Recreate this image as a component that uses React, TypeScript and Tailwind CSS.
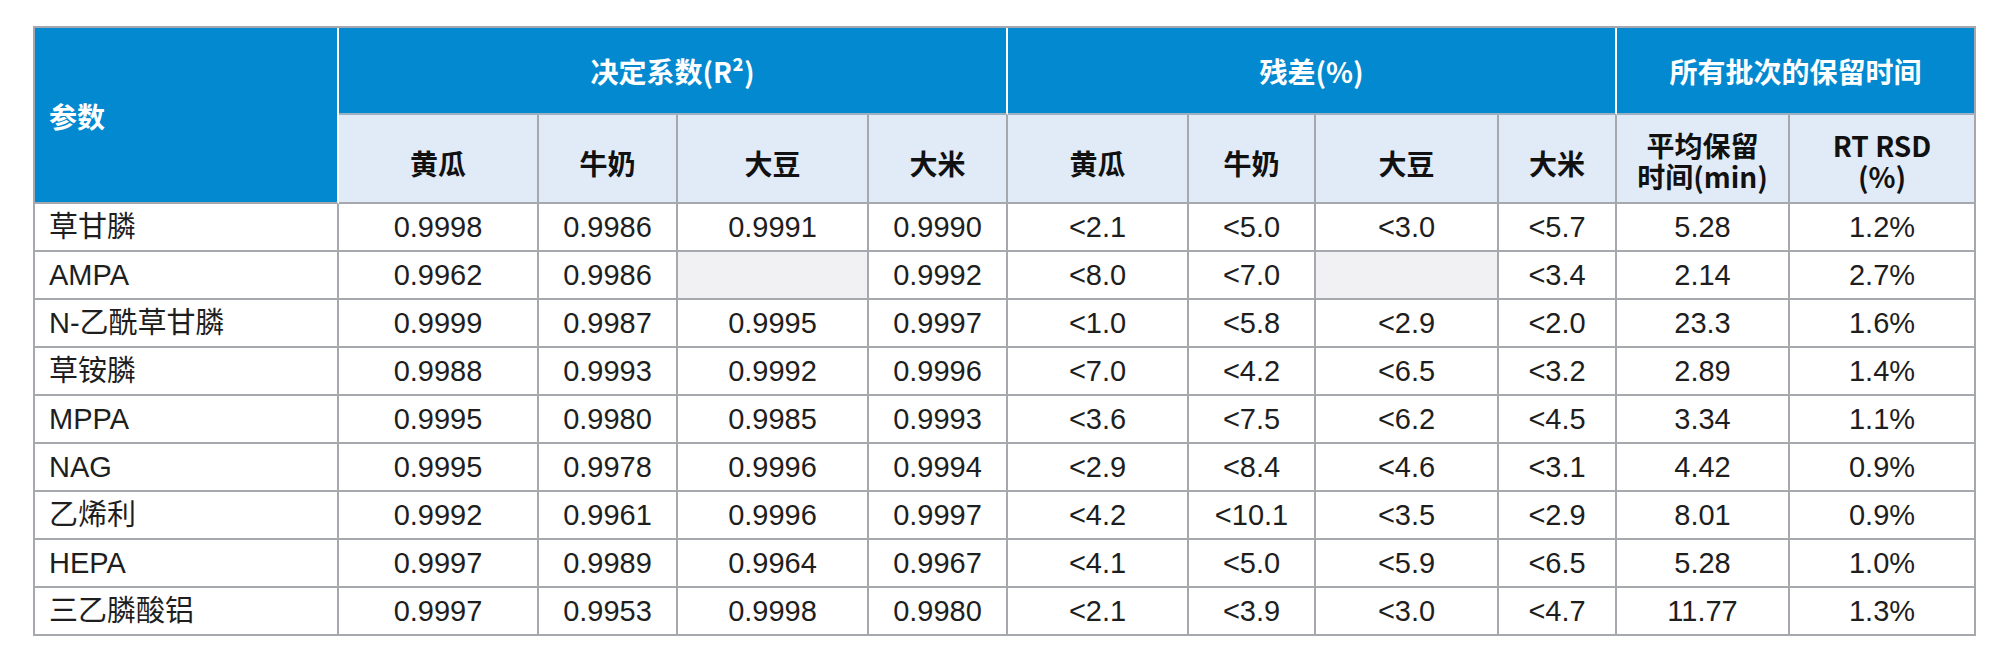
import React from "react";

const cols = [304, 200, 139, 191, 139, 181, 127, 183, 118, 173, 186];

type Row = { name: string; values: (string | null)[] };

const rows: Row[] = [
  { name: "草甘膦", values: ["0.9998", "0.9986", "0.9991", "0.9990", "<2.1", "<5.0", "<3.0", "<5.7", "5.28", "1.2%"] },
  { name: "AMPA", values: ["0.9962", "0.9986", null, "0.9992", "<8.0", "<7.0", null, "<3.4", "2.14", "2.7%"] },
  { name: "N-乙酰草甘膦", values: ["0.9999", "0.9987", "0.9995", "0.9997", "<1.0", "<5.8", "<2.9", "<2.0", "23.3", "1.6%"] },
  { name: "草铵膦", values: ["0.9988", "0.9993", "0.9992", "0.9996", "<7.0", "<4.2", "<6.5", "<3.2", "2.89", "1.4%"] },
  { name: "MPPA", values: ["0.9995", "0.9980", "0.9985", "0.9993", "<3.6", "<7.5", "<6.2", "<4.5", "3.34", "1.1%"] },
  { name: "NAG", values: ["0.9995", "0.9978", "0.9996", "0.9994", "<2.9", "<8.4", "<4.6", "<3.1", "4.42", "0.9%"] },
  { name: "乙烯利", values: ["0.9992", "0.9961", "0.9996", "0.9997", "<4.2", "<10.1", "<3.5", "<2.9", "8.01", "0.9%"] },
  { name: "HEPA", values: ["0.9997", "0.9989", "0.9964", "0.9967", "<4.1", "<5.0", "<5.9", "<6.5", "5.28", "1.0%"] },
  { name: "三乙膦酸铝", values: ["0.9997", "0.9953", "0.9998", "0.9980", "<2.1", "<3.9", "<3.0", "<4.7", "11.77", "1.3%"] },
];

const matrices = ["黄瓜", "牛奶", "大豆", "大米"];

const cjkHead = { fontFamily: '"Noto Sans CJK SC", "Noto Sans", sans-serif' };
const bodyFont = { fontFamily: '"Liberation Sans", Arial, "Noto Sans CJK SC", sans-serif' };

export default function App() {
  return (
    <div className="w-[2000px] h-[667px] bg-white pt-[26px] pl-[33px]">
      <table
        className="table-fixed border-separate border-spacing-0 border-l-2 border-t-2 border-[#a5a9ad]"
        style={{ width: 1941 }}
      >
        <colgroup>
          {cols.map((w, i) => (
            <col key={i} style={{ width: w }} />
          ))}
        </colgroup>
        <thead style={cjkHead} className="font-bold text-[28px]">
          <tr className="h-[87px]">
            <th
              rowSpan={2}
              className="bg-[#0389d0] text-white text-left pl-[14px] pt-[2px] font-bold border-r-2 border-r-white border-b-2 border-b-[#a5a9ad]"
            >
              参数
            </th>
            <th colSpan={4} className="bg-[#0389d0] text-white font-bold border-r-2 border-r-white border-b-2 border-b-[#9fb0c0]">
              决定系数(R²)
            </th>
            <th colSpan={4} className="bg-[#0389d0] text-white font-bold border-r-2 border-r-white border-b-2 border-b-[#9fb0c0]">
              残差(%)
            </th>
            <th colSpan={2} className="bg-[#0389d0] text-white font-bold border-r-2 border-r-[#a5a9ad] border-b-2 border-b-[#9fb0c0]">
              所有批次的保留时间
            </th>
          </tr>
          <tr className="h-[89px]">
            {[...matrices, ...matrices].map((m, i) => (
              <th
                key={i}
                className="bg-[#e0ebf7] text-[#111] font-bold pt-[8px] border-r-2 border-b-2 border-[#a5a9ad]"
              >
                {m}
              </th>
            ))}
            <th className="bg-[#e0ebf7] text-[#111] font-bold leading-[31px] pt-[4px] border-r-2 border-b-2 border-[#a5a9ad]">
              <div>平均保留</div>
              <div>时间(min)</div>
            </th>
            <th className="bg-[#e0ebf7] text-[#111] font-bold leading-[31px] pt-[4px] border-r-2 border-b-2 border-[#a5a9ad]">
              <div>RT RSD</div>
              <div>(%)</div>
            </th>
          </tr>
        </thead>
        <tbody style={bodyFont} className="text-[29px] text-[#1e1e1e]">
          {rows.map((r) => (
            <tr key={r.name} className="h-[48px]">
              <td className="text-left pl-[14px] border-r-2 border-b-2 border-[#a5a9ad] leading-none">
                {r.name}
              </td>
              {r.values.map((v, i) => (
                <td
                  key={i}
                  className={`text-center border-r-2 border-b-2 border-[#a5a9ad] leading-none ${
                    v === null ? "bg-[#f1f1f4]" : ""
                  }`}
                >
                  {v}
                </td>
              ))}
            </tr>
          ))}
        </tbody>
      </table>
    </div>
  );
}
